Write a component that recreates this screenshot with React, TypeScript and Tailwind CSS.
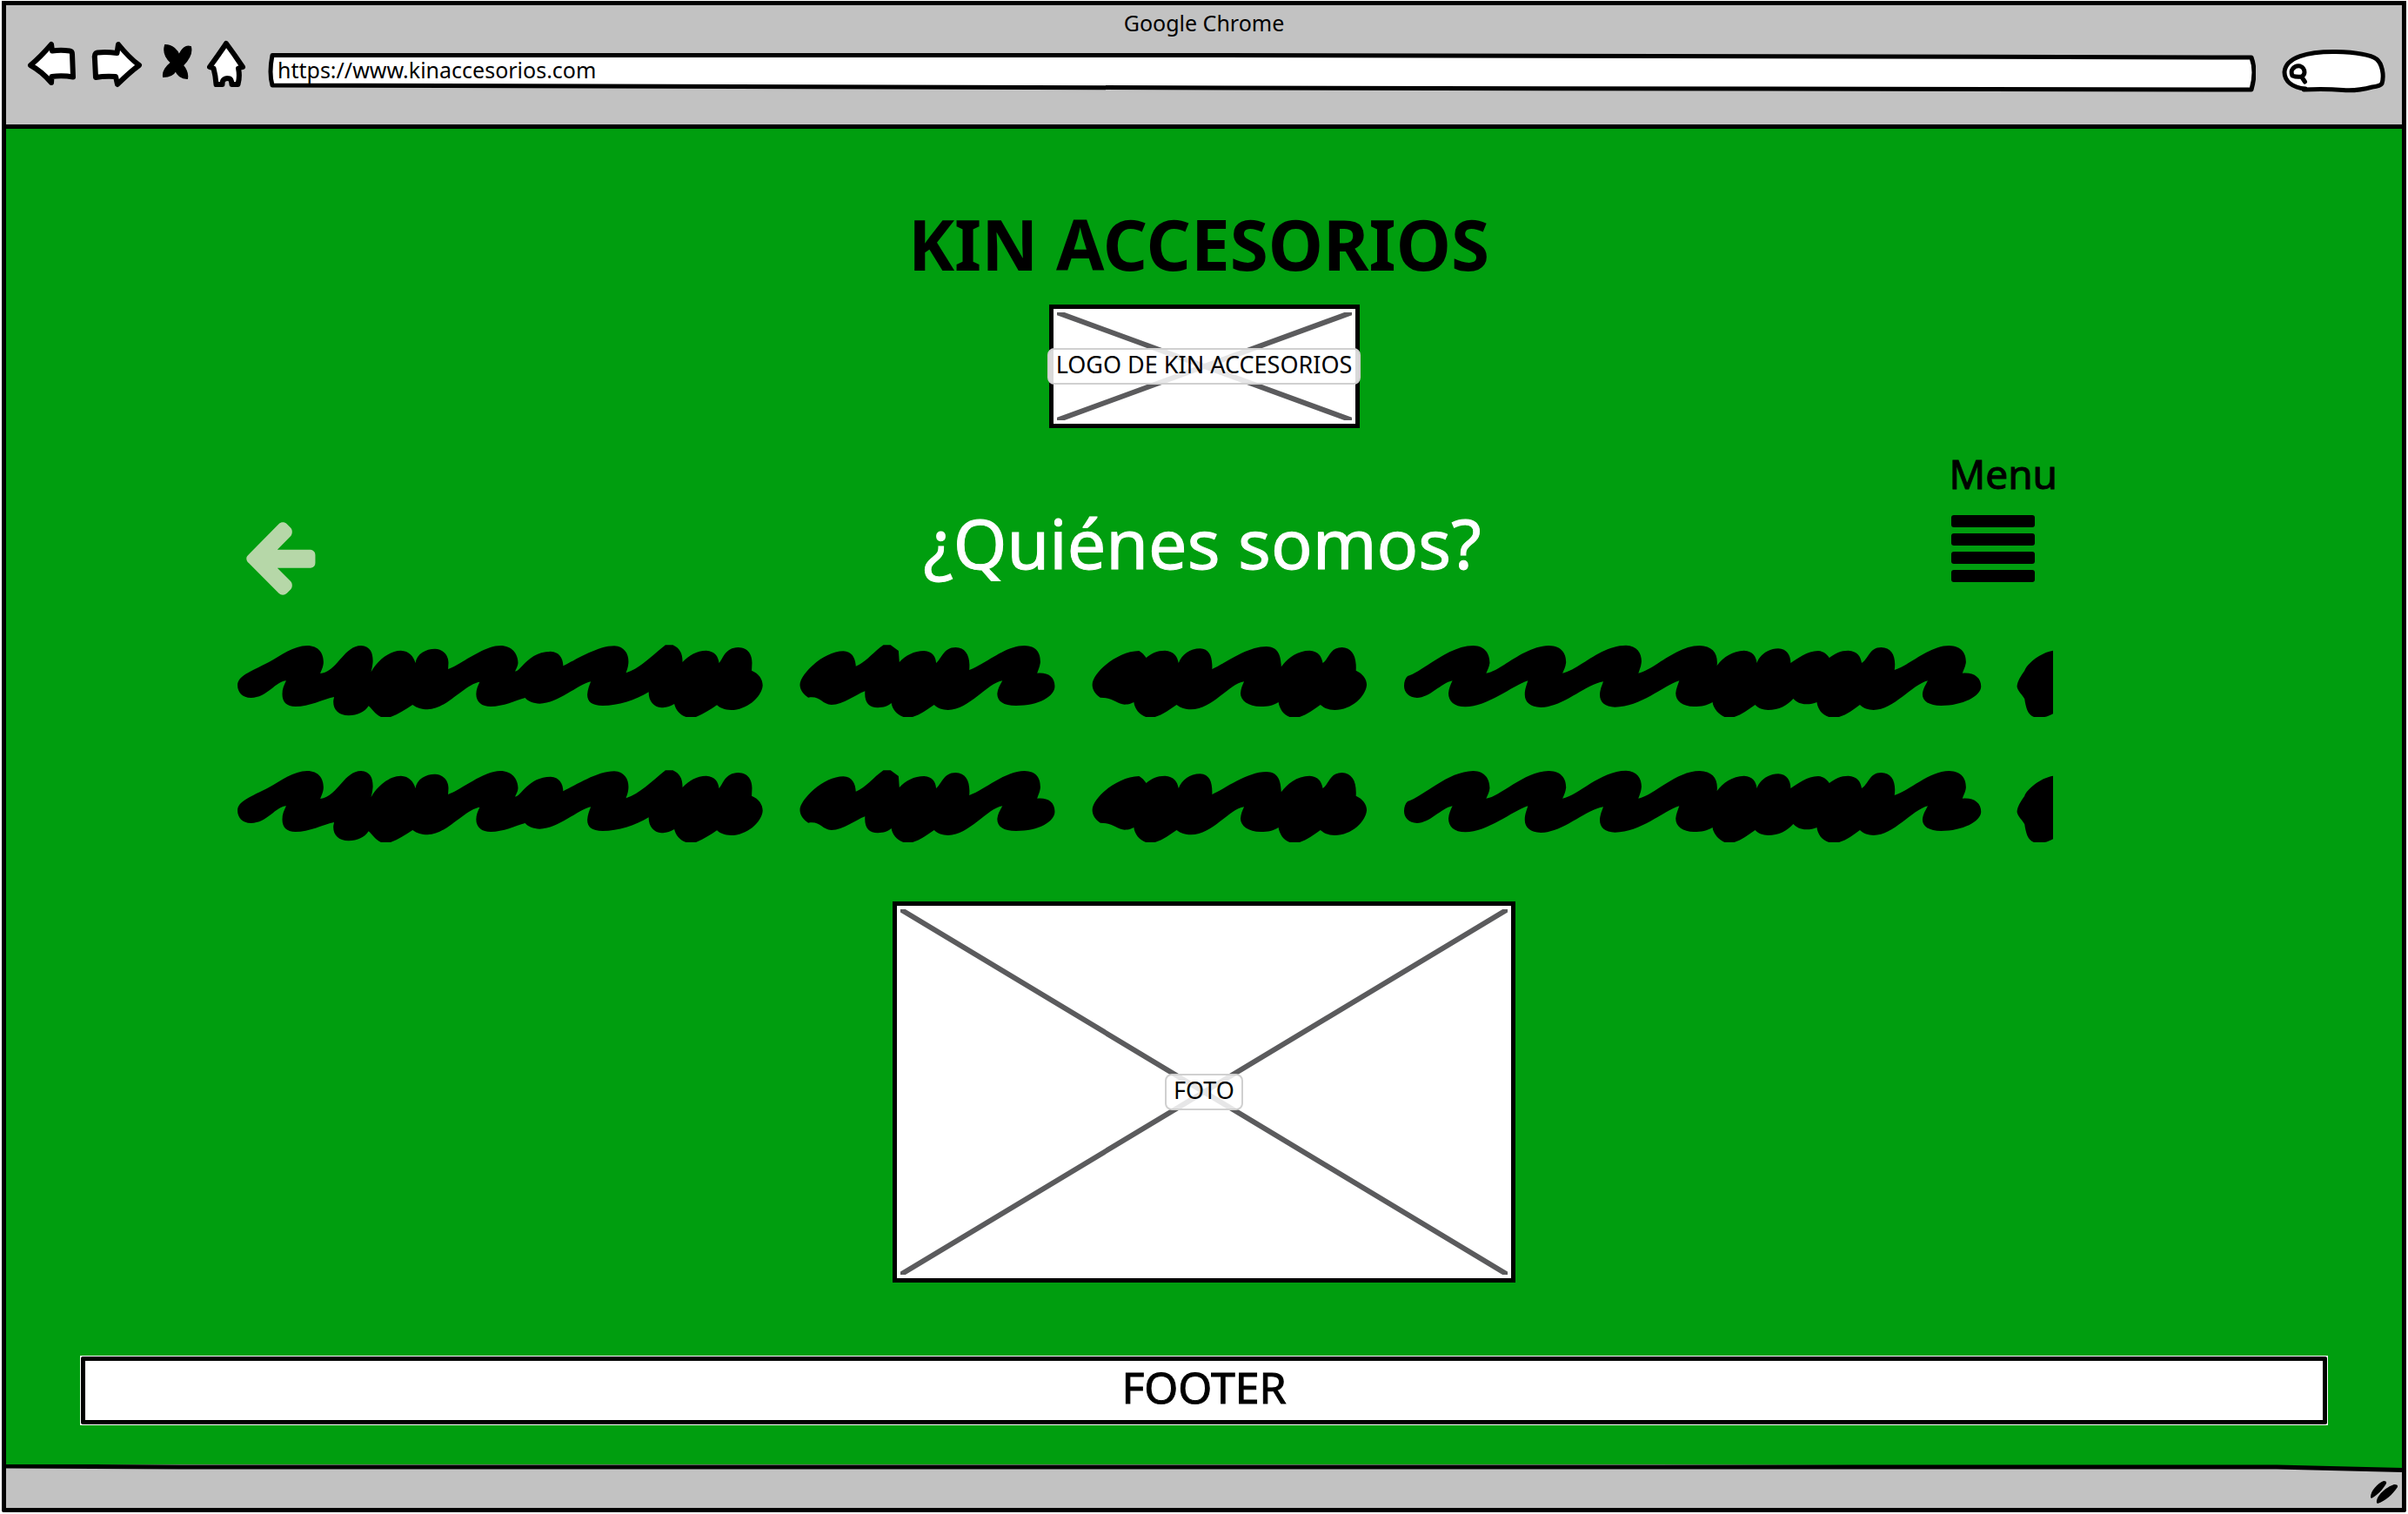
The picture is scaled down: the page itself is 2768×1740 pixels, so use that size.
import type { ReactNode } from "react";

const WORDS_A =
  "M32 683C32 650 70 635 120 603C155 580 190 546 228 546C262 546 275 575 274 605C273 622 268 630 265 642C290 640 310 608 325 588C340 567 357 546 380 546C408 548 414 575 413 603C412 618 410 626 408 637C425 598 460 563 492 563C515 564 528 583 533 606C536 575 562 557 588 557C612 558 626 580 626 605L625 627C660 612 725 546 772 546C805 546 822 575 822 605C821 620 816 625 814 635C832 632 850 567 914 566C938 567 949 590 949 616C985 595 1045 547 1093 547C1122 549 1133 575 1133 600C1133 618 1129 628 1126 640C1165 625 1200 580 1237 544L1258 544C1278 555 1286 575 1285 603C1303 580 1325 563 1352 563C1376 565 1386 583 1388 606C1400 590 1405 553 1442 552C1472 553 1481 580 1481 605L1480 632C1500 642 1511 662 1511 683C1508 725 1465 768 1422 768C1403 767 1392 762 1382 751C1365 765 1345 782 1323 792L1295 792C1278 785 1266 768 1262 747C1250 755 1240 760 1226 760C1203 758 1189 735 1190 706C1150 735 1105 753 1060 753C1030 753 1017 740 1017 715C1018 697 1023 682 1027 670C990 680 935 745 883 746C865 745 850 738 842 726C815 735 780 756 745 756C720 756 704 740 704 713C704 697 709 684 714 671C670 680 620 766 567 766C550 765 538 762 525 750C505 766 485 783 463 792L436 792C420 784 412 765 401 754C390 775 370 786 345 787C315 786 300 765 302 735L304 723C270 732 235 756 195 756C170 755 158 740 158 713C158 695 163 682 169 667C140 668 115 726 70 726C45 726 32 705 32 683Z";

const WORDS_B =
  "M86 201C86 165 145 85 195 85C217 86 225 110 226 137C250 125 270 88 295 64L313 64L333 84L335 123C350 100 372 84 397 84C418 86 426 103 427 126C440 113 445 72 476 72C503 73 513 105 510 150C550 130 600 66 648 66C678 67 688 90 688 122C687 140 682 150 680 161C705 157 724 172 724 205C725 240 685 273 627 273C595 273 580 258 580 232C581 215 587 202 593 187C555 195 510 287 457 288C442 287 432 283 422 270C405 285 388 304 368 312L345 312C328 303 317 285 315 264C306 274 296 280 281 280C258 278 247 262 249 223C225 235 195 270 165 270C140 268 137 238 107 245C95 235 86 218 86 201ZM818 201C818 160 880 85 935 84C943 90 948 98 953 108C965 93 980 83 1000 83C1022 85 1031 102 1034 126C1042 98 1062 76 1088 76C1112 78 1119 105 1118 147C1150 127 1205 69 1254 69C1283 70 1290 98 1291 139C1305 112 1330 83 1362 83C1384 85 1392 103 1395 126C1410 113 1412 72 1443 72C1468 74 1480 100 1478 152C1495 162 1505 182 1505 201C1503 240 1467 288 1425 288C1410 287 1400 283 1389 270C1373 285 1355 304 1337 312L1312 312C1296 303 1287 285 1284 261C1272 272 1258 276 1240 276C1208 275 1189 255 1189 230C1190 213 1194 202 1198 190C1160 197 1120 286 1065 286C1050 285 1040 282 1029 270C1012 285 995 304 975 312L952 312C936 303 924 285 922 261C915 266 910 269 899 269C880 268 870 245 838 245C826 235 818 218 818 201Z";

const WORDS_C =
  "M47 205C47 190 50 178 55 171C90 155 145 67 203 66C230 67 240 95 240 125C239 140 235 150 232 161C262 157 318 66 374 66C402 67 412 93 412 123C411 140 407 150 404 161C440 150 490 65 547 65C572 66 582 92 582 120C581 140 577 150 575 161C610 150 660 66 713 66C742 68 755 92 752 135C765 107 787 84 813 83C833 85 840 103 842 126C848 98 868 76 890 76C910 77 918 100 918 126C935 110 955 84 980 84C993 86 1000 96 1005 108C1018 93 1030 83 1048 83C1068 85 1076 103 1078 126C1093 113 1095 72 1122 72C1147 73 1156 105 1152 150C1185 135 1230 66 1275 66C1303 67 1313 92 1313 122C1312 140 1307 150 1305 161C1330 157 1347 175 1347 207C1347 240 1305 273 1257 273C1230 272 1215 258 1215 234C1216 215 1222 202 1227 187C1192 200 1150 288 1105 288C1092 287 1083 283 1074 270C1060 285 1045 304 1027 312L1004 312C988 303 979 285 977 261C970 266 963 268 953 268C940 267 932 262 924 249C910 272 892 288 867 288C855 287 846 283 838 270C823 285 808 304 791 312L769 312C757 303 744 285 742 261C730 272 717 276 700 276C675 275 659 258 659 230C660 213 664 202 667 187C630 205 580 278 522 278C500 277 488 262 488 235C489 215 493 203 496 190C455 200 405 279 355 279C332 278 319 262 319 235C319 215 323 203 326 187C290 205 235 277 185 277C160 276 147 258 147 230C148 213 152 200 156 187C130 195 105 246 76 246C58 245 47 227 47 205ZM1510 83C1480 90 1450 130 1445 152C1437 170 1428 190 1428 208C1430 225 1440 235 1445 250C1448 280 1452 305 1466 312L1490 312C1497 310 1503 305 1510 300Z";

/* One line of scribbled placeholder text. */
function Scribble() {
  return (
    <svg viewBox="272 741 2088 83" preserveAspectRatio="xMinYMid slice" className="h-[83px] w-full" aria-hidden="true">
      <path transform="translate(260 560) scale(.40816 .33333)" d={WORDS_A} />
      <path transform="translate(880 720) scale(.45918 .33333)" d={WORDS_B} />
      <path transform="translate(1590 720) scale(.5102 .33333)" d={WORDS_C} />
    </svg>
  );
}

function ToolButton({ label, children }: { label: string; children: ReactNode }) {
  return (
    <button type="button" aria-label={label} className="h-16 shrink-0">
      {children}
    </button>
  );
}

const outline = {
  fill: "#fff",
  stroke: "#000",
  strokeWidth: 5,
  strokeLinejoin: "round",
  strokeLinecap: "round",
} as const;

/* Crossed box that stands in for an image, with a caption in the middle. */
function Placeholder({ label, size }: { label: string; size: string }) {
  return (
    <div role="img" aria-label={label} className={`relative flex items-center justify-center border-5 border-black bg-white ${size}`}>
      <svg viewBox="0 0 100 100" preserveAspectRatio="none" className="absolute inset-1 h-[calc(100%-8px)] w-[calc(100%-8px)]" aria-hidden="true">
        <path d="M0 0L100 100M100 0L0 100" stroke="#5b5b5d" strokeWidth="6" vectorEffect="non-scaling-stroke" />
      </svg>
      <span className="relative flex h-[42px] shrink-0 items-center rounded-lg border-2 border-[#d0d0d0] bg-white/85 px-2 pb-1 text-[27px] whitespace-nowrap">
        {label}
      </span>
    </div>
  );
}

function Toolbar() {
  return (
    <header className="h-[142px] border-b-5 border-black bg-[#c2c2c2]">
      <div className="text-center text-[25px] leading-10">Google Chrome</div>
      <div className="flex gap-4 pr-[18px] pl-[23px]">
        <ToolButton label="Back">
          <svg viewBox="30 46 58 64" className="h-16 w-[58px]" {...outline} strokeWidth={6}>
            <path d="M35 75Q46 66 59 51L60 58.500Q70 57 80 58.500Q83 59 83 62L84 88.500Q72 86.500 59.500 88L59 95Q48 82 35 75Z" />
          </svg>
        </ToolButton>
        <ToolButton label="Forward">
          <svg viewBox="104 46 62 64" className="h-16 w-[62px]" {...outline} strokeWidth={6}>
            <path d="M109 68Q108 61 112 60.500Q122 59.500 134.500 61L136 51Q148 66 160 75Q149 83 135 97L133 88Q121 87 110 89Z" />
          </svg>
        </ToolButton>
        <ToolButton label="Stop">
          <svg viewBox="182 46 40 64" className="h-16 w-10">
            <path d="M190 52C198 52 204 58 206 64C209 56 214 52 219 54C221 62 215 70 210 75C214 80 216 85 215 90C208 90 204 86 202 81C199 86 195 88 188 88C187 81 192 76 197 72C190 66 188 59 190 52Z" stroke="#000" strokeWidth="2" />
          </svg>
        </ToolButton>
        <ToolButton label="Home">
          <svg viewBox="238 46 46 64" className="h-16 w-[46px]" {...outline} strokeWidth={6}>
            <path d="M260 50Q269 62 279 77L274 78.500Q276 88 273.500 97H266.500Q266 91 264 90.500Q260 89.500 258 91Q255.500 92 255.500 97H248.500Q248 88 245.500 78.500L241 77Q252 62 260 50Z" />
          </svg>
        </ToolButton>
        <div className="relative ml-2 h-16 min-w-0 flex-1">
          <svg viewBox="0 0 2285 64" preserveAspectRatio="none" className="absolute inset-0 h-full w-full" aria-hidden="true" {...outline}>
            <path d="M5 17.500L1100 17.500L2280 20Q2286 36 2280 57L1100 55L5 52Q1 38 5 17.500Z" />
          </svg>
          <input
            type="text"
            aria-label="Address"
            defaultValue="https://www.kinaccesorios.com"
            className="relative h-full w-full bg-transparent pt-1 pr-3 pl-[11px] text-[25px] outline-none"
          />
        </div>
        <div className="relative ml-3.5 h-16 w-[120px] shrink-0">
          <svg viewBox="0 0 120 64" className="absolute inset-0 h-full w-full" aria-hidden="true" {...outline}>
            <path d="M27 56C12 55 3 47 3 37C4 20 30 13 62 13.500C85 14 102 17 109 22C115 27 118 40 115 50Q113 53 104 54Q85 59 70 57.500Q50 56 25 57" />
            <path d="M12 41Q10 36 12.500 33Q16 29 21 30Q26 32 26 37Q26 40 23 42Q17 43 12 41ZM22.500 42L26.500 48" />
          </svg>
          <input type="search" aria-label="Search" className="relative h-full w-full bg-transparent pr-3 pl-8 text-[25px] outline-none" />
        </div>
      </div>
    </header>
  );
}

export default function App() {
  return (
    <div className="flex min-h-screen flex-col bg-white px-0.5 pt-px pb-0.5 font-['Noto_Sans',sans-serif] text-black">
      <div className="flex flex-1 flex-col rounded-b-xs border-5 border-black bg-[#009e0f]">
        <Toolbar />

        <main className="flex flex-1 flex-col items-center pt-[84px] pb-[45px]">
          <h1 className="pr-3 text-[80px] leading-24 font-bold">KIN ACCESORIOS</h1>
          <div className="mt-[22px]">
            <Placeholder label="LOGO DE KIN ACCESORIOS" size="h-[142px] w-[357px]" />
          </div>

          <div className="mt-6 grid w-full grid-cols-[1fr_auto_1fr] items-end pr-[396px] pl-[276px]">
            <button type="button" aria-label="Volver" className="h-[84px] w-20">
              <svg viewBox="283 600 80 84" className="h-full w-full" fill="#b6d7a8">
                <path
                  transform="translate(260 560) scale(.40816 .33333)"
                  d="M57 245C57 240 60 236 64 231L148 127C155 119 164 119 171 127L182 140C187 147 187 160 182 168L144 215L237 215C247 217 251 224 251 234V260C251 270 247 276 238 278L144 278L182 325C187 332 187 345 182 352L171 365C164 373 155 373 148 365L64 262C60 258 57 252 57 245Z"
                />
              </svg>
            </button>
            <h2 className="ml-29 pb-3 text-[79px] leading-24 text-white [-webkit-text-stroke:1px_#fff]">¿Quiénes somos?</h2>
            <button type="button" className="flex flex-col items-start justify-self-end pb-[15px]">
              <span className="-ml-[3px] text-[46px] leading-14 [-webkit-text-stroke:1px_#000]">Menu</span>
              <span className="mt-5 flex w-24 flex-col gap-[7px]" aria-hidden="true">
                <span className="h-3.5 rounded-[3px] bg-black" />
                <span className="h-3.5 rounded-[3px] bg-black" />
                <span className="h-3.5 rounded-[3px] bg-black" />
                <span className="h-3.5 rounded-[3px] bg-black" />
              </span>
            </button>
          </div>

          <div className="mt-[57px] flex w-full flex-col gap-[61px] pr-[401px] pl-[265px]">
            <Scribble />
            <Scribble />
          </div>

          <div className="mt-[68px]">
            <Placeholder label="FOTO" size="h-[438px] w-[716px]" />
          </div>

          <div className="mt-auto w-full px-[85px]">
            <footer className="border border-white bg-white">
              <div className="rounded-xs border-5 border-black pb-2 text-center text-[50px] leading-15 [-webkit-text-stroke:1px_#000]">FOOTER</div>
            </footer>
          </div>
        </main>

        <div className="relative flex h-[50px] justify-end bg-[#c2c2c2]">
          <svg viewBox="0 0 2754 12" preserveAspectRatio="none" className="absolute inset-x-0 top-0 h-3 w-full" aria-hidden="true">
            <path d="M0 0H2754V7L2700 6L2600 3L1900 0Z" fill="#009e0f" />
            <path d="M0 2L200 3L1900 3L2610 3L2754 6.500" fill="none" stroke="#000" strokeWidth="5" />
          </svg>
          <svg viewBox="2720 1700 41 33" className="mt-[17px] h-[33px] w-[41px]" aria-hidden="true">
            <path d="M2725 1721C2725 1713 2733 1705 2740 1702Q2744 1702 2743 1705C2739 1712 2733 1718 2726 1722ZM2732 1727C2731 1719 2743 1709 2752 1706Q2757 1706 2756 1709C2750 1718 2742 1725 2733 1728Z" />
          </svg>
        </div>
      </div>
    </div>
  );
}
